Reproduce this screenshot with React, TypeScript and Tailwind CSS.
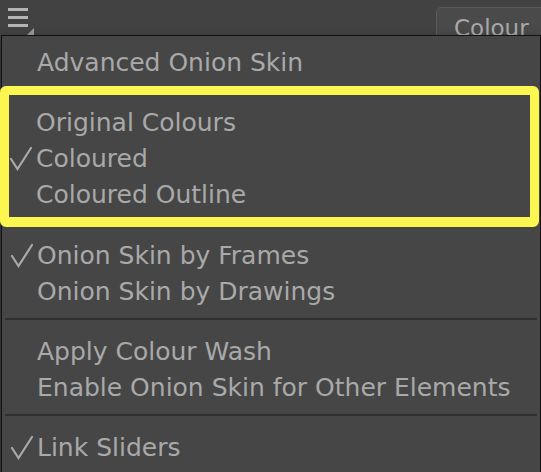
import React from 'react';

const font = { fontFamily: '"DejaVu Sans", "Liberation Sans", sans-serif' };

const Check = () => (
  <svg width="24" height="26" viewBox="0 0 24 26" className="absolute left-[8px] top-[5px]">
    <path d="M2 14 L8.5 24 L22 3" fill="none" stroke="#a9a9a9" strokeWidth="2.2" strokeLinecap="round" strokeLinejoin="miter" />
  </svg>
);

type ItemProps = { label: string; checked?: boolean; pad?: string };

const Item = ({ label, checked, pad = 'pl-[35px]' }: ItemProps) => (
  <div className={`relative h-[36px] flex items-center ${pad} text-[25px] leading-none text-[#a9a9a9] whitespace-nowrap`}>
    {checked && <Check />}
    <span>{label}</span>
  </div>
);

const Separator = () => (
  <div className="h-[24px] pt-[9px] px-[3px]">
    <div className="h-[2px] bg-[#2f2f2f]" />
  </div>
);

export default function App() {
  return (
    <div className="relative w-[541px] h-[472px] overflow-hidden bg-[#424242]" style={font}>
      {/* toolbar */}
      <div className="flex items-start justify-between h-[35px]">
        <div className="relative ml-[8px] mt-[8px] w-[26px] h-[27px]">
          <div className="flex flex-col gap-[5px]">
            <div className="w-[20px] h-[3px] bg-[#b4b4b4]" />
            <div className="w-[20px] h-[3px] bg-[#b4b4b4]" />
            <div className="w-[20px] h-[3px] bg-[#b4b4b4]" />
          </div>
          <svg width="7" height="7" viewBox="0 0 7 7" className="absolute left-[19px] top-[20px]">
            <path d="M7 0 L7 7 L0 7 Z" fill="#9c9c9c" />
          </svg>
        </div>
        <div className="mt-[7px] -mr-[10px] w-[115px] h-[40px] rounded-[5px] border border-[#5a5a5a] bg-[#4a4a4a] pl-[17px] pt-[9px] text-[23px] leading-none text-[#a9a9a9]">
          Colour
        </div>
      </div>

      {/* dropdown menu */}
      <div className="absolute left-[1px] top-[35px] w-[540px] h-[460px] border border-[#121212] bg-[#464646] pt-[8px] shadow-[0_4px_10px_rgba(0,0,0,0.4)]">
        <Item label="Advanced Onion Skin" />
        <div className="h-[6px]" />
        <div className="-ml-[2px] mr-[1px] border-[9px] border-b-[10px] border-[#fcf750] rounded-[6px] pt-[9px] pb-[5px]">
          <div className="-ml-[8px]">
            <Item label="Original Colours" />
            <Item label="Coloured" checked />
            <Item label="Coloured Outline" />
          </div>
        </div>
        <div className="h-[10px]" />
        <Item label="Onion Skin by Frames" checked />
        <Item label="Onion Skin by Drawings" />
        <Separator />
        <Item label="Apply Colour Wash" />
        <Item label="Enable Onion Skin for Other Elements" />
        <Separator />
        <Item label="Link Sliders" checked />
      </div>
    </div>
  );
}
